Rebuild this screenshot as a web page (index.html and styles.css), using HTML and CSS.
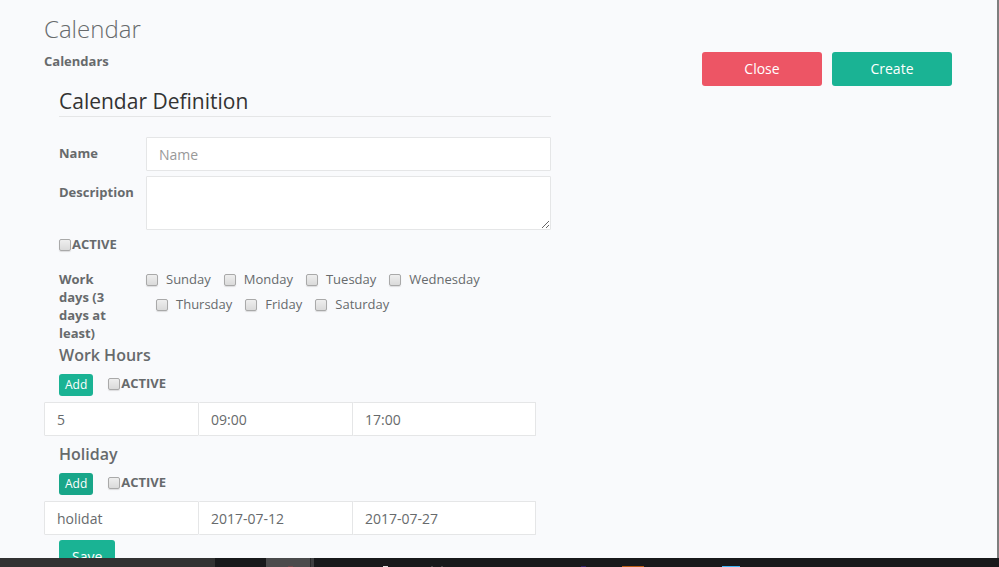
FILE: index.html
```html
<!DOCTYPE html>
<html lang="en">
<head>
<meta charset="utf-8">
<title>Calendar</title>
<link rel="stylesheet" href="styles.css">
</head>
<body>
<main class="page">
  <header class="page-head">
    <div>
      <h1 class="title">Calendar</h1>
      <strong class="crumb">Calendars</strong>
    </div>
    <div class="actions">
      <button class="btn btn-danger btn-wide" type="button">Close</button>
      <button class="btn btn-wide" type="button">Create</button>
    </div>
  </header>
  <form class="form">
    <h2 class="legend">Calendar Definition</h2>
    <div class="field">
      <label for="name">Name</label>
      <input class="control" id="name" type="text" placeholder="Name">
    </div>
    <div class="field">
      <label for="description">Description</label>
      <textarea class="control control-area" id="description"></textarea>
    </div>
    <label class="active"><input type="checkbox">ACTIVE</label>
    <div class="field work-days" role="group" aria-labelledby="days">
      <span class="days-label" id="days">Work days (3 days at least)</span>
      <div class="days">
        <div class="day-row">
          <label class="day"><input type="checkbox">Sunday</label>
          <label class="day"><input type="checkbox">Monday</label>
          <label class="day"><input type="checkbox">Tuesday</label>
          <label class="day"><input type="checkbox">Wednesday</label>
        </div>
        <div class="day-row day-row-next">
          <label class="day"><input type="checkbox">Thursday</label>
          <label class="day"><input type="checkbox">Friday</label>
          <label class="day"><input type="checkbox">Saturday</label>
        </div>
      </div>
    </div>
    <section class="section">
      <h3 class="heading">Work Hours</h3>
      <div class="tools">
        <button class="btn btn-small" type="button">Add</button>
        <label class="active"><input type="checkbox">ACTIVE</label>
      </div>
      <div class="entry">
        <input class="control" type="text" value="5" aria-label="Day">
        <input class="control" type="text" value="09:00" aria-label="Start">
        <input class="control" type="text" value="17:00" aria-label="End">
      </div>
    </section>
    <section class="section">
      <h3 class="heading">Holiday</h3>
      <div class="tools">
        <button class="btn btn-small btn-pressed" type="button">Add</button>
        <label class="active"><input type="checkbox">ACTIVE</label>
      </div>
      <div class="entry">
        <input class="control" type="text" value="holidat" aria-label="Holiday name">
        <input class="control" type="text" value="2017-07-12" aria-label="From">
        <input class="control" type="text" value="2017-07-27" aria-label="To">
      </div>
    </section>
    <button class="btn" type="submit">Save</button>
  </form>
</main>
<footer class="taskbar">
  <svg class="taskbar-art" width="999" height="9" viewBox="0 0 999 9" aria-hidden="true">
    <rect width="215" height="9" fill="#323232"/>
    <rect x="266" width="44" height="9" fill="#4b4b4c"/>
    <rect x="310" width="1" height="9" fill="#29292a"/>
    <rect x="311" width="3" height="9" fill="#3e3e40"/>
    <path d="M288 8h5v1h-5z" fill="#70484b"/>
    <path d="M383 8h5v1h-5z" fill="#ddd"/>
    <path d="M431 8h2v1h-2zM441 8h2v1h-2z" fill="#444"/>
    <path d="M581 8h5v1h-5z" fill="#2c1d66"/>
    <path d="M622 8h22v1h-22z" fill="#b85a14"/>
    <path d="M722 8h18v1h-18z" fill="#3fb4f5"/>
  </svg>
</footer>
</body>
</html>
```
FILE: styles.css
```css
* {
  box-sizing: border-box;
}

body {
  display: flex;
  flex-direction: column;
  height: 100vh;
  margin: 0;
  overflow: hidden;
  background: #f9fafc;
  color: #676a6c;
  font: 13px/18px "Open Sans", sans-serif;
}

h1, h2, h3 {
  margin: 0;
}

.page {
  flex: 1;
  min-height: 0;
  overflow: hidden;
  padding: 16px 45px 0 44px;
  border-right: 2px solid #7e7e7e;
}

.page-head {
  display: flex;
  justify-content: space-between;
  align-items: flex-end;
  height: 70px;
}

.page-head > :first-child {
  align-self: flex-start;
}

.title {
  margin-bottom: 10px;
  font-size: 24px;
  font-weight: 300;
  line-height: 26px;
}

.crumb {
  display: block;
}

.actions {
  display: flex;
  gap: 10px;
}

.btn {
  height: 34px;
  padding: 0 12px;
  border: 1px solid transparent;
  border-radius: 3px;
  background: #1ab394 border-box;
  color: #fff;
  font: 14px/20px "Open Sans", sans-serif;
}

.btn-wide {
  width: 120px;
}

.btn-danger {
  background-color: #ed5565;
}

.btn-small {
  height: 22px;
  padding: 0 5px;
  font-size: 12px;
  line-height: 18px;
}

.btn-pressed {
  background-color: #18a689;
}

.form {
  width: 57.5%;
  padding: 0 15px;
}

.legend {
  margin-bottom: 20px;
  border-bottom: 1px solid #e5e6e7;
  color: #333;
  font-size: 21px;
  font-weight: 400;
  line-height: 30px;
}

.field {
  display: grid;
  grid-template-columns: 87px 1fr;
  margin-bottom: 5px;
  font-weight: 700;
}

.field > label {
  padding-top: 7px;
}

.control {
  display: block;
  width: 100%;
  min-width: 0;
  height: 34px;
  margin: 0;
  padding: 6px 12px;
  border: 1px solid #e5e6e7;
  border-radius: 1px;
  background: #fff;
  color: #676a6c;
  font: 14px/20px "Open Sans", sans-serif;
}

.control::placeholder {
  color: #999;
}

.control-area {
  height: 54px;
  resize: vertical;
}

input[type="checkbox"] {
  appearance: none;
  flex: none;
  width: 12px;
  height: 12px;
  margin: 2px 0 0;
  border: 1px solid #a9a9a9;
  border-radius: 2px;
  background: linear-gradient(#eee, #dadada);
  box-shadow: 0 1px 1px #dcdcde;
}

.active {
  display: flex;
  align-items: center;
  gap: 1px;
  width: max-content;
  font-weight: 700;
}

.work-days {
  margin: 17px 0 3px;
}

.days-label {
  width: 56px;
}

.day-row {
  display: flex;
  gap: 13px;
}

.day-row-next {
  margin: 7px 0 0 10px;
}

.day {
  display: flex;
  align-items: center;
  gap: 8px;
  font-weight: 400;
}

.section {
  margin-bottom: 8px;
}

.section:last-of-type {
  margin-bottom: 5px;
}

.heading {
  font-size: 16px;
  font-weight: 600;
  line-height: 20px;
}

.tools {
  display: flex;
  align-items: flex-start;
  gap: 15px;
  margin: 9px 0 6px;
}

.entry {
  display: grid;
  grid-template-columns: 155fr 154fr 183fr;
  margin: 0 15px 0 -15px;
}

.entry .control + .control {
  border-left: 0;
}

.taskbar {
  flex: none;
  height: 9px;
  overflow: hidden;
  background: #18191b;
}

.taskbar-art {
  display: block;
}
```
